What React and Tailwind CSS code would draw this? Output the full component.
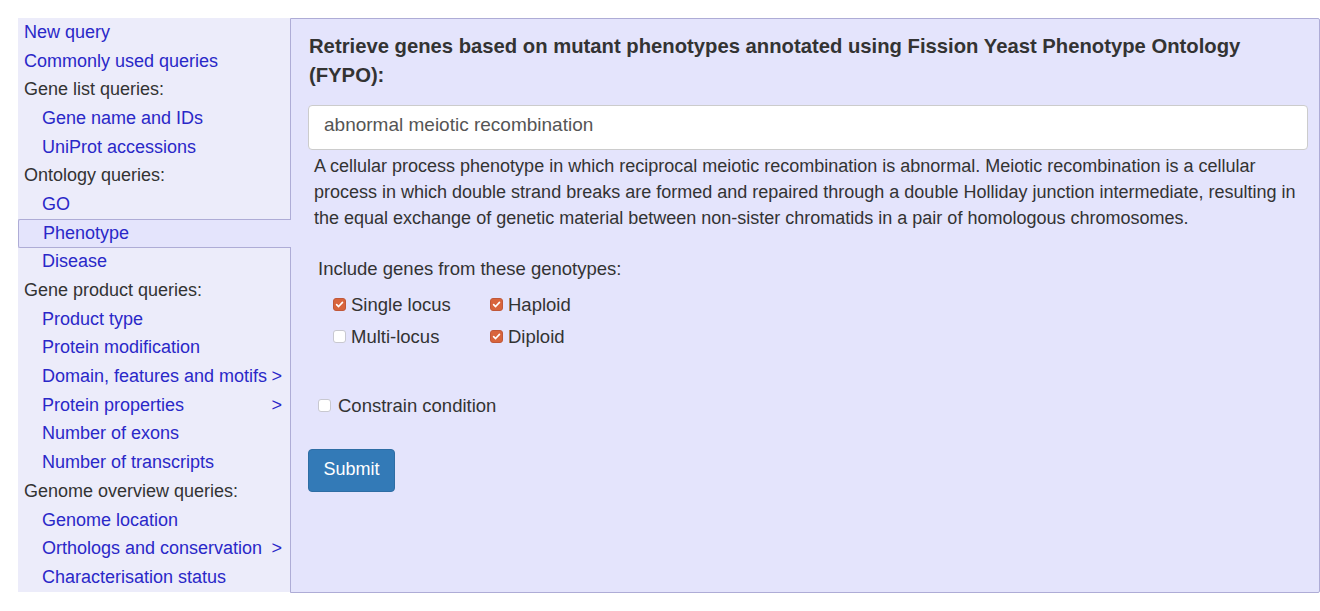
import React from "react";

const menu = [
  { label: "New query", link: true, level: 0 },
  { label: "Commonly used queries", link: true, level: 0 },
  { label: "Gene list queries:", level: 0 },
  { label: "Gene name and IDs", link: true, level: 1 },
  { label: "UniProt accessions", link: true, level: 1 },
  { label: "Ontology queries:", level: 0 },
  { label: "GO", link: true, level: 1 },
  { label: "Phenotype", link: true, level: 1, active: true },
  { label: "Disease", link: true, level: 1 },
  { label: "Gene product queries:", level: 0 },
  { label: "Product type", link: true, level: 1 },
  { label: "Protein modification", link: true, level: 1 },
  { label: "Domain, features and motifs", link: true, level: 1, more: true },
  { label: "Protein properties", link: true, level: 1, more: true },
  { label: "Number of exons", link: true, level: 1 },
  { label: "Number of transcripts", link: true, level: 1 },
  { label: "Genome overview queries:", level: 0 },
  { label: "Genome location", link: true, level: 1 },
  { label: "Orthologs and conservation", link: true, level: 1, more: true },
  { label: "Characterisation status", link: true, level: 1 },
];

function Box({ checked }) {
  if (checked) {
    return (
      <span className="w-[13px] h-[13px] rounded-[3px] bg-[#d8643c] border border-[#c0583a] flex items-center justify-center shrink-0">
        <svg width="9" height="9" viewBox="0 0 10 10">
          <path d="M1.8 5.2 L4 7.3 L8.3 2.6" fill="none" stroke="white" strokeWidth="1.8" strokeLinecap="round" strokeLinejoin="round" />
        </svg>
      </span>
    );
  }
  return <span className="w-[13px] h-[13px] rounded-[3px] bg-white border border-[#c8c8d0] shrink-0" />;
}

function Check({ checked, label, gap = "gap-[5px]" }) {
  return (
    <label className={"flex items-center h-[32px] " + gap}>
      <Box checked={checked} />
      <span>{label}</span>
    </label>
  );
}

export default function App() {
  return (
    <div className="bg-white h-[611px] pt-[18px] pl-[18px] font-['Liberation_Sans',Arial,sans-serif] text-[#333]">
      <div className="flex">
        {/* Menu */}
        <div className="w-[272px] h-[574px] bg-[#ececfa] shrink-0 text-[18px] whitespace-nowrap">
          {menu.map((item) => (
            <div
              key={item.label}
              className={
                "h-[28.7px] flex items-center justify-between pr-[8px] " +
                (item.level ? "pl-[24px] " : "pl-[6px] ") +
                (item.active
                  ? "relative z-10 -mr-px bg-[#e4e4fc] border border-r-0 border-[#aeacd6] rounded-l-[2px] pl-[24px]"
                  : "")
              }
            >
              <span className={item.link ? "text-[#2a28c8]" : "text-[#333]"}>{item.label}</span>
              {item.more && <span className="text-[#2a28c8] shrink-0">&gt;</span>}
            </div>
          ))}
        </div>

        {/* Main panel */}
        <div className="flex-1 h-[575px] bg-[#e4e4fc] border border-[#aeacd6] rounded-r-[2px] pl-[17px] pr-[11px] pt-[13px]">
          <h2 className="text-[20.25px] leading-[29px] font-bold pl-px">
            Retrieve genes based on mutant phenotypes annotated using Fission Yeast Phenotype Ontology
            (FYPO):
          </h2>
          <div className="mt-[15px] h-[45px] bg-white border border-[#ccc] rounded-[4px] flex items-center px-[15px] pb-[4px] text-[19px] text-[#555]">
            abnormal meiotic recombination
          </div>
          <p className="mt-[3px] px-[6px] text-[18px] leading-[26px]">
            A cellular process phenotype in which reciprocal meiotic recombination is abnormal. Meiotic
            recombination is a cellular process in which double strand breaks are formed and repaired
            through a double Holliday junction intermediate, resulting in the equal exchange of genetic
            material between non-sister chromatids in a pair of homologous chromosomes.
          </p>
          <div className="mt-[24px] pl-[10px] text-[18.5px]">Include genes from these genotypes:</div>
          <div className="mt-[6px] pl-[25px] text-[18.5px] grid grid-cols-[157px_auto] w-fit">
            <Check checked label="Single locus" />
            <Check checked label="Haploid" />
            <Check label="Multi-locus" />
            <Check checked label="Diploid" />
          </div>
          <div className="mt-[37px] pl-[10px] text-[18.5px]">
            <Check label="Constrain condition" gap="gap-[7px]" />
          </div>
          <button className="mt-[27px] w-[87px] h-[43px] bg-[#337ab7] border border-[#2e6da4] rounded-[4px] text-white text-[18px] pb-[2px]">
            Submit
          </button>
        </div>
      </div>
    </div>
  );
}
